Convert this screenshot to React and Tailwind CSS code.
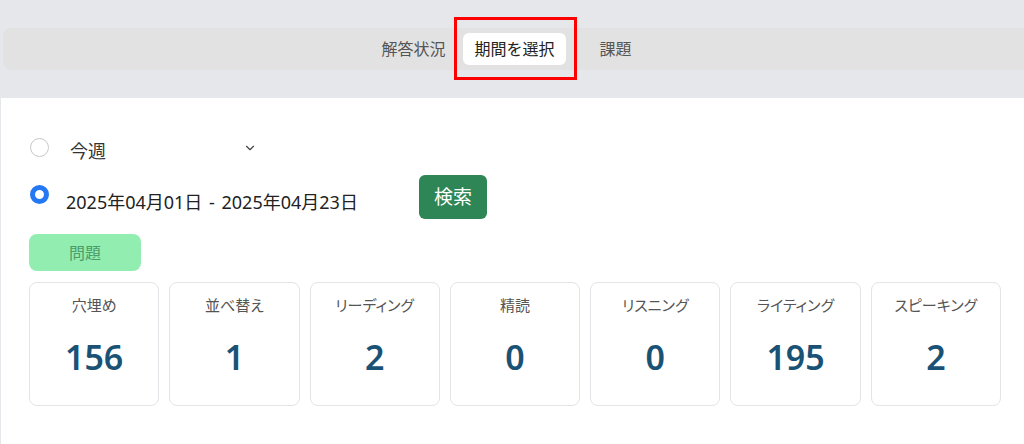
import { ChevronDown } from "lucide-react";

const counts = [
  { label: "穴埋め", value: 156 },
  { label: "並べ替え", value: 1 },
  { label: "リーディング", value: 2 },
  { label: "精読", value: 0 },
  { label: "リスニング", value: 0 },
  { label: "ライティング", value: 195 },
  { label: "スピーキング", value: 2 },
];

export default function App() {
  return (
    <div
      className="w-[1024px] h-[444px] bg-[#e5e7eb] flex flex-col overflow-hidden"
      style={{ fontFamily: '"Noto Sans", "Noto Sans CJK JP", sans-serif' }}
    >
      {/* tab bar */}
      <div className="h-[98px] pt-[28px] pl-[3px]">
        <div className="h-[42px] bg-[#e2e2e2] rounded-l-lg flex items-center justify-center gap-[18px] pl-[2px]">
          <button className="text-[16px] text-[#555]">解答状況</button>
          <div className="relative">
            <button className="bg-white rounded-md h-[32px] px-[11px] text-[16px] text-[#222]">
              期間を選択
            </button>
            <div className="absolute -left-[9px] -top-[16px] w-[123px] h-[63px] border-[3px] border-[#ff0000] pointer-events-none" />
          </div>
          <button className="text-[16px] text-[#555] px-[16px]">課題</button>
        </div>
      </div>

      {/* content */}
      <div className="flex-1 bg-white ml-[1px] px-[28px] pt-[38px]">
        <div className="flex items-center h-[22px]">
          <span className="w-[19px] h-[19px] rounded-full border border-[#c8c8c8] ml-[1px]" />
          <span className="ml-[21px] mt-[8px] text-[18px] text-[#333]">今週</span>
          <ChevronDown className="ml-[137px] mt-[2px] text-[#444]" size={14} strokeWidth={2} />
        </div>

        <div className="flex items-center mt-[17px] h-[44px]">
          <span className="w-[19px] h-[19px] rounded-full border-[5px] border-[#2478f4] bg-white ml-[1px] -mt-[6px]" />
          <span className="ml-[17px] w-[353px] mt-[10px] text-[18px] text-[#222] whitespace-nowrap [word-spacing:2px]">
            2025年04月01日 - 2025年04月23日
          </span>
          <button className="w-[68px] h-[44px] rounded-md bg-[#2e8555] text-white text-[19px]">
            検索
          </button>
        </div>

        <button className="mt-[15px] w-[112px] h-[37px] rounded-lg bg-[#92eeb0] text-[#4e9a69] text-[16px]">
          問題
        </button>

        <div className="mt-[11px] grid grid-cols-7 gap-[10px] w-[972px]">
          {counts.map((c) => (
            <div
              key={c.label}
              className="h-[124px] rounded-lg border border-[#e2e4e8] flex flex-col items-center"
            >
              <span className="mt-[11px] text-[15px] text-[#555] [font-feature-settings:'palt']">
                {c.label}
              </span>
              <span className="mt-[23px] text-[34px] font-semibold text-[#1a5276] leading-none">
                {c.value}
              </span>
            </div>
          ))}
        </div>
      </div>
    </div>
  );
}
